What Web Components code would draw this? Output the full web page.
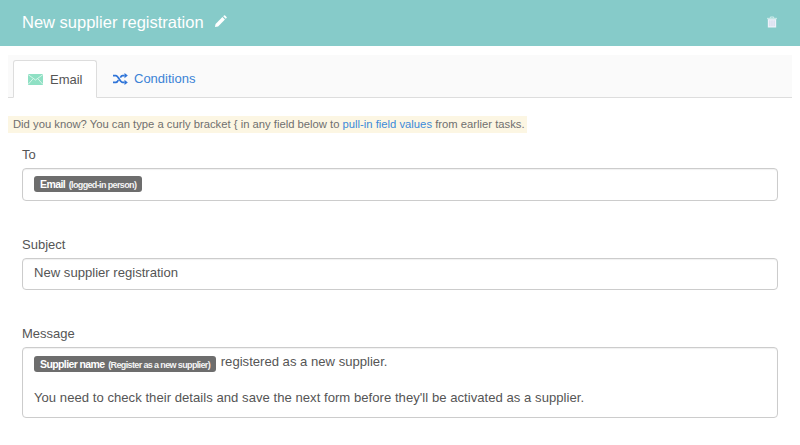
<!doctype html>
<html>
<head>
<meta charset="utf-8">
<style>
  html, body { margin: 0; height: 445px; overflow: hidden; background: #fff; }
  body { font-family: "Liberation Sans", Arial, sans-serif; font-size: 13px; color: #555; }
</style>
</head>
<body>
<task-editor>
  <task-header slot="header">New supplier registration</task-header>
  <task-tabs slot="tabs"></task-tabs>
  <task-hint slot="hint"></task-hint>
  <form-field label="To" height="33">
    <field-token name="Email" from="(logged-in person)"></field-token>
  </form-field>
  <form-field label="Subject" height="32" gap="35" raise>New supplier registration</form-field>
  <form-field label="Message" height="71" gap="35" multi>
    <div><field-token lift name="Supplier name" from="(Register as a new supplier)"></field-token> registered as a new supplier.</div>
    <div style="height:17px"></div>
    <div style="letter-spacing:.03px">You need to check their details and save the next form before they'll be activated as a supplier.</div>
  </form-field>
</task-editor>
<script>
class TaskEditor extends HTMLElement {
  constructor() {
    super();
    this.attachShadow({ mode: "open" }).innerHTML = /*html*/ `
      <style>
        :host { display: block; }
        .tabs { padding: 9px 8px 0; }
        .hint { padding: 18px 8px 0; }
        .fields { padding: 13px 22px 0; display: flex; flex-direction: column; }
      </style>
      <slot name="header"></slot>
      <div class="tabs"><slot name="tabs"></slot></div>
      <div class="hint"><slot name="hint"></slot></div>
      <div class="fields"><slot></slot></div>
    `;
  }
}

class TaskHeader extends HTMLElement {
  constructor() {
    super();
    this.attachShadow({ mode: "open" }).innerHTML = /*html*/ `
      <style>
        :host { display: flex; align-items: center; height: 46px; box-sizing: border-box; padding: 0 22px; background: #86cbc9; color: #fff; }
        .title { font-size: 16.5px; line-height: 20px; margin-top: -3px; }
        .edit { margin: -3px 0 0 10px; display: block; }
        .bin { margin: -3px 1px 0 auto; display: block; }
      </style>
      <span class="title"><slot></slot></span>
      <svg class="edit" width="13" height="13" viewBox="0 0 14 14" fill="#fff">
        <path d="M1 13l.7-3.4 7.4-7.4 2.7 2.7-7.4 7.4z"/>
        <path d="M9.9 1.4l.9-.9a.8.8 0 0 1 1.1 0l1.6 1.6a.8.8 0 0 1 0 1.1l-.9.9z"/>
      </svg>
      <svg class="bin" width="10" height="12" viewBox="0 0 12 14">
        <path d="M4 2.2V1h4v1.2" fill="none" stroke="#d8f0ef" stroke-width="1.1"/>
        <rect x="0" y="2" width="12" height="1.6" fill="#c3e6e5"/>
        <rect x="1" y="3.6" width="10" height="10" fill="#eef1fa"/>
        <path d="M3.5 5v7M6 5v7M8.5 5v7" stroke="#c9d0e6" stroke-width="1"/>
      </svg>
    `;
  }
}

class TaskTabs extends HTMLElement {
  constructor() {
    super();
    this.attachShadow({ mode: "open" }).innerHTML = /*html*/ `
      <style>
        :host { display: flex; align-items: flex-end; height: 43px; box-sizing: border-box; padding: 5px 0 0 5px; background: #fafafa; border-bottom: 1px solid #ddd; }
        .tab { display: flex; align-items: center; height: 37px; box-sizing: border-box; font-size: 13px; }
        .active { width: 84px; padding-left: 14px; margin-bottom: -1px; height: 38px; background: #fff; border: 1px solid #ddd; border-bottom-color: #fff; border-radius: 3px 3px 0 0; color: #555; }
        .other { padding-left: 16px; color: #3b82d6; }
        svg { display: block; margin-right: 7px; }
        .other svg { margin-right: 6px; }
      </style>
      <div class="tab active">
        <svg width="15" height="11" viewBox="0 0 15 11">
          <rect width="15" height="11" fill="#8fe0c4"/>
          <path d="M0 .5l7.5 5.5L15 .5M0 10.5l5.3-6M15 10.5l-5.3-6" fill="none" stroke="#d6f5ea" stroke-width="1"/>
        </svg>
        <span>Email</span>
      </div>
      <div class="tab other">
        <svg width="15" height="12" viewBox="0 0 15 12" fill="none" stroke="#2f74d8" stroke-width="1.7">
          <path d="M0 2.6h2.8c2.8 0 4 6.8 6.8 6.8h2"/>
          <path d="M0 9.4h2.8c1.2 0 2-1.1 2.6-2.3M7.3 4.6c.6-1.1 1.2-2 2.3-2h2"/>
          <path d="M11.5 0l3.3 2.6-3.3 2.6zM11.5 6.8l3.3 2.6-3.3 2.6z" fill="#2f74d8" stroke="none"/>
        </svg>
        <span>Conditions</span>
      </div>
    `;
  }
}

class TaskHint extends HTMLElement {
  constructor() {
    super();
    this.attachShadow({ mode: "open" }).innerHTML = /*html*/ `
      <style>
        :host { display: block; }
        .box { display: inline-block; height: 17px; line-height: 17px; padding: 0 2px 0 5px; background: #fcf6e3; font-size: 11.25px; color: #6f6f6f; white-space: nowrap; vertical-align: top; }
        a { color: #3b8ad9; text-decoration: none; }
      </style>
      <div class="box">Did you know? You can type a curly bracket { in any field below to <a>pull-in field values</a> from earlier tasks.</div>
    `;
  }
}

class FormField extends HTMLElement {
  constructor() {
    super();
    const height = this.getAttribute("height") || 32;
    const gap = this.getAttribute("gap") || 0;
    const multi = this.hasAttribute("multi");
    const raise = this.hasAttribute("raise") ? 3 : 0;
    this.attachShadow({ mode: "open" }).innerHTML = /*html*/ `
      <style>
        :host { display: block; margin-top: ${gap}px; }
        label { display: block; height: 22px; line-height: 18px; font-size: 13px; color: #555; }
        .box { box-sizing: border-box; height: ${height}px; display: flex; ${multi ? "flex-direction: column; justify-content: flex-start; padding-top: 5px;" : "align-items: center;"} padding-left: 11px; padding-right: 11px; padding-bottom: ${raise}px; background: #fff; border: 1px solid #ccc; border-radius: 4px; box-shadow: inset 0 1px 1px rgba(0,0,0,.06); font-size: 13.1px; line-height: 17px; color: #555; }
      </style>
      <label>${this.getAttribute("label")}</label>
      <div class="box"><div><slot></slot></div></div>
    `;
  }
}

class FieldToken extends HTMLElement {
  constructor() {
    super();
    const top = this.hasAttribute("lift") ? 3 : 0;
    this.attachShadow({ mode: "open" }).innerHTML = /*html*/ `
      <style>
        :host { display: inline-block; height: 16px; line-height: 15px; padding: 0 6px; margin: ${top}px 1px 0 0; background: #6d6d6d; border-radius: 3px; color: #fff; white-space: nowrap; vertical-align: top; }
        b { font-size: 10.5px; letter-spacing: -.6px; }
        small { font-size: 9px; font-weight: bold; letter-spacing: -.63px; color: #f4f4f4; }
      </style>
      <b>${this.getAttribute("name")}</b> <small>${this.getAttribute("from")}</small>
    `;
  }
}

customElements.define("task-editor", TaskEditor);
customElements.define("task-header", TaskHeader);
customElements.define("task-tabs", TaskTabs);
customElements.define("task-hint", TaskHint);
customElements.define("form-field", FormField);
customElements.define("field-token", FieldToken);
</script>
</body>
</html>
